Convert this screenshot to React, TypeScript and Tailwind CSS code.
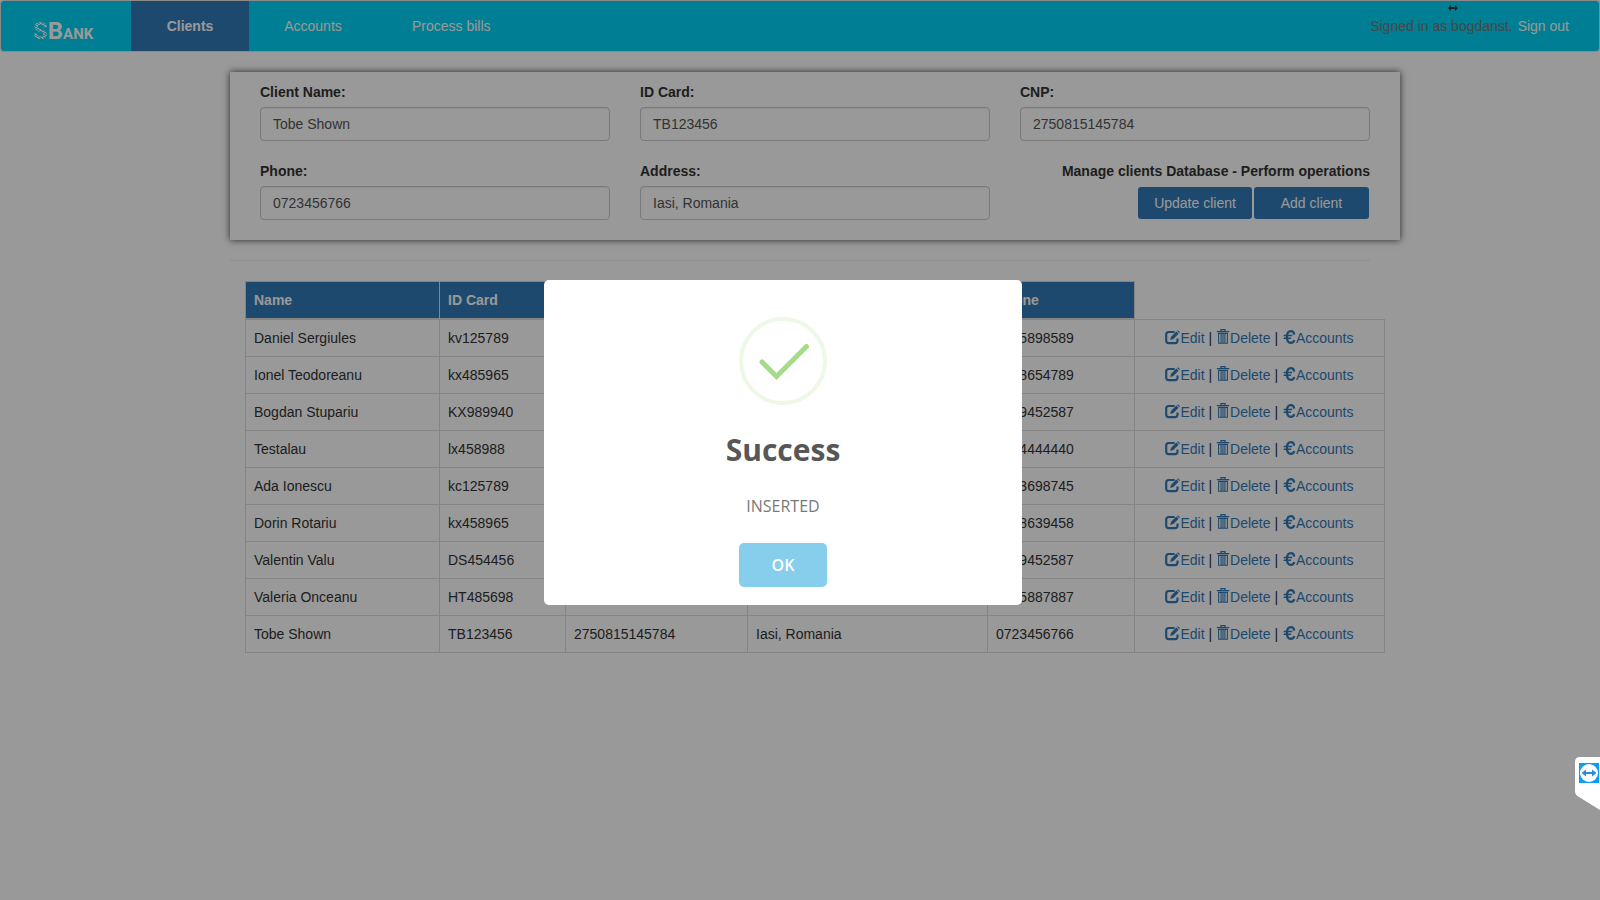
import React from "react";

type Client = { name: string; card: string; cnp: string; address: string; phone: string };

const clients: Client[] = [
  { name: "Daniel Sergiules", card: "kv125789", cnp: "", address: "", phone: "0745898589" },
  { name: "Ionel Teodoreanu", card: "kx485965", cnp: "", address: "", phone: "0748654789" },
  { name: "Bogdan Stupariu", card: "KX989940", cnp: "", address: "", phone: "0749452587" },
  { name: "Testalau", card: "lx458988", cnp: "", address: "", phone: "0744444440" },
  { name: "Ada Ionescu", card: "kc125789", cnp: "", address: "", phone: "0743698745" },
  { name: "Dorin Rotariu", card: "kx458965", cnp: "", address: "", phone: "0748639458" },
  { name: "Valentin Valu", card: "DS454456", cnp: "", address: "", phone: "0749452587" },
  { name: "Valeria Onceanu", card: "HT485698", cnp: "", address: "", phone: "0745887887" },
  { name: "Tobe Shown", card: "TB123456", cnp: "2750815145784", address: "Iasi, Romania", phone: "0723456766" },
];

function EditIcon() {
  return (
    <svg viewBox="0 0 14 14" className="inline-block size-[15px] align-[-2px]" aria-hidden="true">
      <path d="M9 1.900H3.500A2.400 2.400 0 0 0 1.100 4.300v5.500a2.400 2.400 0 0 0 2.400 2.400h5.800a2.400 2.400 0 0 0 2.400-2.400V8" fill="none" stroke="currentColor" strokeWidth="2" />
      <path d="M4.800 9.400l.9-3L10.600 1.500l2.100 2.100-4.900 4.900zM11.300.9l.7-.7 2 2-.7.7z" fill="currentColor" />
    </svg>
  );
}

function TrashIcon() {
  return (
    <svg viewBox="0 0 14 15" className="inline-block h-[15px] w-3.5 align-[-1px]" aria-hidden="true">
      <path d="M5 2.200V.7h4v1.500M.8 2.700h12.400" fill="none" stroke="currentColor" strokeWidth="1.3" />
      <path d="M2 4.400h10M2.600 4v10.200h8.800V4M5.100 5v9M7 5v9M8.900 5v9" fill="none" stroke="currentColor" strokeWidth="1.1" />
    </svg>
  );
}

function EuroIcon() {
  return (
    <svg viewBox="0 0 14 14" className="inline-block size-3.5 align-[-1px]" aria-hidden="true">
      <path d="M12.200 4.600C11.900 2.400 10.800 1.200 8.900 1.200 6.200 1.200 4.900 3.400 4.900 7s1.300 5.800 4 5.800c1.700 0 2.900-1 3.400-2.700" fill="none" stroke="currentColor" strokeWidth="2.2" />
      <path d="M2 4.800h8.500l-.6 1.500H1.300zM2 7.600h7.400l-.6 1.500H1.300z" fill="currentColor" />
    </svg>
  );
}

function Field({ id, label, value }: { id: string; label: string; value: string }) {
  return (
    <div>
      <label htmlFor={id} className="mb-[5px] block font-bold">{label}</label>
      <input
        id={id}
        defaultValue={value}
        className="block h-[34px] w-full rounded border border-[#ccc] bg-white px-3 text-[#555] shadow-[inset_0_1px_1px_rgba(0,0,0,0.075)]"
      />
    </div>
  );
}

function NavBar() {
  return (
    <nav className="flex h-[52px] items-stretch rounded border border-[#e7e7e7] bg-[#00d2f5] text-white">
      <a href="#home" aria-label="SBank" className="flex w-[130px] items-baseline pt-3.5 pl-8 font-['Roboto',sans-serif] leading-8 font-bold">
        <span className="bg-[repeating-linear-gradient(30deg,#fff_0_1px,#ffffff40_1px_2px)] bg-clip-text text-2xl leading-8 text-transparent">S</span>
        <span className="text-2xl leading-8">B</span>
        <span className="text-[15px] leading-8">ANK</span>
      </a>
      <a href="#clients" className="flex w-[118px] items-center justify-center bg-[#337ab7] font-bold">Clients</a>
      <a href="#accounts" className="flex w-[128px] items-center justify-center">Accounts</a>
      <a href="#bills" className="flex items-center px-[35px]">Process bills</a>
      <p className="ml-auto flex items-center gap-[5px] pr-[30px] text-[#777]">
        <span>Signed in as bogdanst.</span>
        <a href="#signout" className="text-white">Sign out</a>
      </p>
    </nav>
  );
}

function ClientForm() {
  return (
    <form className="-mr-[30px] grid grid-cols-3 gap-x-[30px] gap-y-5 bg-white px-[30px] pt-2.5 pb-5 shadow-[0_0_7px_rgba(0,0,0,0.75)]">
      <Field id="name" label="Client Name:" value="Tobe Shown" />
      <Field id="card" label="ID Card:" value="TB123456" />
      <Field id="cnp" label="CNP:" value="2750815145784" />
      <Field id="phone" label="Phone:" value="0723456766" />
      <Field id="address" label="Address:" value="Iasi, Romania" />
      <div className="text-right">
        <p className="mb-[6px] font-bold whitespace-nowrap">Manage clients Database - Perform operations</p>
        <div className="flex justify-end gap-0.5 pr-px">
          <button type="button" className="h-8 w-[114px] rounded-[3px] bg-[#337ab7] text-white">Update client</button>
          <button type="button" className="h-8 w-[115px] rounded-[3px] bg-[#337ab7] text-white">Add client</button>
        </div>
      </div>
    </form>
  );
}

function ClientTable() {
  const head = "border border-[#ddd] border-b-2 bg-[#337ab7] p-2 text-left font-bold text-white";
  const cell = "border border-[#ddd] p-2";
  return (
    <div className="-mr-[15px] ml-[15px]">
      <table className="w-full table-fixed border-collapse">
        <colgroup>
          <col className="w-[194px]" />
          <col className="w-[126px]" />
          <col className="w-[182px]" />
          <col className="w-[240px]" />
          <col className="w-[147px]" />
          <col />
        </colgroup>
        <thead>
          <tr>
            <th className={head}>Name</th>
            <th className={head}>ID Card</th>
            <th className={head}>CNP</th>
            <th className={head}>Address</th>
            <th className={head}>Phone</th>
          </tr>
        </thead>
        <tbody>
          {clients.map((c) => (
            <tr key={c.name}>
              <td className={cell}>{c.name}</td>
              <td className={cell}>{c.card}</td>
              <td className={cell}>{c.cnp}</td>
              <td className={cell}>{c.address}</td>
              <td className={cell}>{c.phone}</td>
              <td className="border border-[#ddd] p-2 text-center whitespace-nowrap">
                <a href="#edit" className="text-[#337ab7]"><EditIcon />Edit</a>
                {" | "}
                <a href="#delete" className="text-[#337ab7]"><TrashIcon />Delete</a>
                {" | "}
                <a href="#accounts" className="text-[#337ab7]"><EuroIcon />Accounts</a>
              </td>
            </tr>
          ))}
        </tbody>
      </table>
    </div>
  );
}

function SuccessDialog() {
  return (
    <div className="fixed inset-0 flex items-center justify-center bg-black/40 pr-[34px] pb-[15px]">
      <div role="dialog" aria-modal="true" aria-labelledby="dialog-title" className="flex w-[478px] flex-col items-center rounded-[5px] bg-white px-[17px] pt-[37px] pb-[18px] font-['Open_Sans',sans-serif]">
        <svg viewBox="0 0 88 88" className="size-[88px]" aria-hidden="true">
          <circle cx="44" cy="44" r="42" fill="none" stroke="#edf8e7" strokeWidth="4" />
          <path d="M23 45l14.500 14.500L67.500 29.500" fill="none" stroke="#a5dc86" strokeWidth="5" strokeLinecap="round" />
        </svg>
        <h2 id="dialog-title" className="mt-[25px] text-3xl leading-10 font-bold text-[#575757]">Success</h2>
        <p className="mt-6 text-base leading-6 text-[#797979]">INSERTED</p>
        <button type="button" className="mt-[25px] h-11 w-[88px] rounded-[5px] bg-[#87cdec] text-base font-semibold text-white">OK</button>
      </div>
    </div>
  );
}

function RemoteTab() {
  return (
    <svg viewBox="0 0 25 54" className="fixed top-[757px] right-0 h-[54px] w-[25px]" aria-hidden="true">
      <path d="M25 0H5Q0 0 0 5v29q0 4 4 6l21 13z" fill="#fff" />
      <path d="M4 6h20v20H4z" fill="#0e9bf5" />
      <circle cx="14" cy="16" r="9" fill="#fff" />
      <path d="M6.500 16l4.500-3.500v2.500h6v-2.500l4.500 3.500-4.500 3.500V17h-6v2.500z" fill="#2a8be0" />
    </svg>
  );
}

function ResizeCursor() {
  return (
    <svg viewBox="0 0 10 6" className="fixed top-[5px] right-[142px] h-1.5 w-2.5" aria-hidden="true">
      <path d="M0 3l3-3v2h4V0l3 3-3 3V4H3v2z" fill="#222" />
    </svg>
  );
}

export default function App() {
  return (
    <div className="min-h-screen bg-white font-['Liberation_Sans',Arial,sans-serif] text-sm leading-5 text-[#333]">
      <NavBar />
      <main className="mx-auto mt-5 w-full max-w-[1170px] px-[15px]">
        <ClientForm />
        <hr className="my-5 border-[#eee]" />
        <ClientTable />
      </main>
      <SuccessDialog />
      <ResizeCursor />
      <RemoteTab />
    </div>
  );
}
